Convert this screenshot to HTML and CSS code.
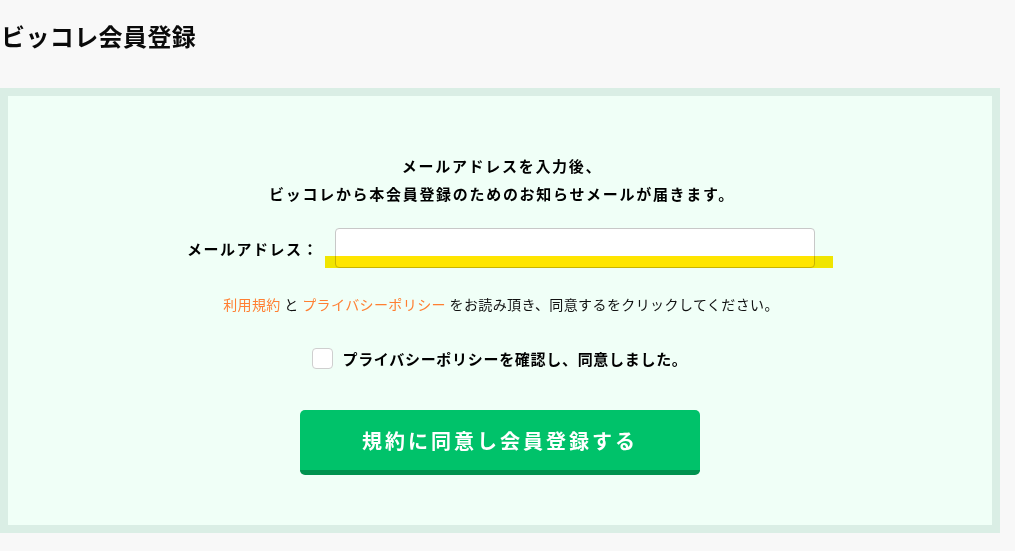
FILE: index.html
```html
<!DOCTYPE html>
<html lang="ja">
<head>
  <meta charset="UTF-8">
  <title>ビッコレ会員登録</title>
  <link rel="stylesheet" href="styles.css">
</head>
<body>

  <h1 class="page-title">ビッコレ会員登録</h1>

  <div class="register-box">
    <form id="registerForm">
      <p class="lead">
        メールアドレスを入力後、<br>
        ビッコレから本会員登録のためのお知らせメールが届きます。
      </p>

      <div class="email-row">
        <label for="email" class="email-label">メールアドレス：</label>
        <div class="email-field">
          <input type="email" id="email" class="email-input" />
          <span class="marker"></span>
        </div>
      </div>

      <p class="terms">
        <a href="#">利用規約</a> と <a href="#">プライバシーポリシー</a> をお読み頂き、同意するをクリックしてください。
      </p>

      <label class="agree">
        <input type="checkbox" id="agree" />
        <span class="agree-box"></span>
        <span class="agree-text">プライバシーポリシーを確認し、同意しました。</span>
      </label>

      <button type="submit" class="submit-btn">規約に同意し会員登録する</button>
    </form>
  </div>

</body>
</html>
```

FILE: styles.css
```css
* {
  box-sizing: border-box;
}
html, body {
  margin: 0;
  padding: 0;
  background-color: #f8f8f8;
  font-family: "Noto Sans CJK JP", "Noto Sans", sans-serif;
  color: #111;
}
.page-title {
  margin: 0;
  height: 88px;
  padding: 20px 0 0 1px;
  font-size: 24px;
  font-weight: 700;
  line-height: 32px;
  letter-spacing: 0.4px;
  color: #0a0a0a;
}
.register-box {
  width: 1000px;
  height: 445px;
  border: 8px solid #daeee5;
  background-color: #f0fff7;
}
form {
  display: flex;
  flex-direction: column;
  align-items: center;
  padding-top: 56px;
}
.lead {
  margin: 0;
  font-size: 15px;
  font-weight: 700;
  line-height: 28px;
  letter-spacing: 1.7px;
  text-align: center;
  padding-left: 4px;
  color: #000;
}
.email-row {
  display: flex;
  align-items: center;
  gap: 16px;
  margin-top: 20px;
  padding-left: 2px;
}
.email-label {
  font-size: 15px;
  font-weight: 700;
  letter-spacing: 1.5px;
  color: #000;
}
.email-field {
  position: relative;
}
.email-input {
  display: block;
  width: 480px;
  height: 40px;
  border: 1px solid #c8c8c8;
  border-radius: 4px;
  background: #fff;
  font-size: 15px;
  padding: 0 10px;
}
.marker {
  position: absolute;
  left: -10px;
  top: 28px;
  width: 508px;
  height: 12px;
  background-color: #ffe500;
  mix-blend-mode: multiply;
  pointer-events: none;
}
.terms {
  margin: 26px 0 0;
  font-size: 14px;
  line-height: 20px;
  letter-spacing: 0.4px;
  padding-left: 2px;
}
.terms a {
  color: #ff7f32;
  text-decoration: none;
}
.agree {
  display: flex;
  align-items: center;
  gap: 9px;
  margin-top: 34px;
  cursor: pointer;
}
.agree input {
  display: none;
}
.agree-box {
  width: 21px;
  height: 21px;
  border: 1px solid #cfcfcf;
  border-radius: 4px;
  background: #fff;
}
.agree-text {
  font-size: 15px;
  font-weight: 700;
  letter-spacing: 0.7px;
  color: #000;
}
.submit-btn {
  margin-top: 41px;
  width: 400px;
  height: 65px;
  border: none;
  border-bottom: 5px solid #00924f;
  border-radius: 5px;
  background-color: #00c26a;
  color: #fff;
  font-family: inherit;
  font-size: 20px;
  font-weight: 700;
  letter-spacing: 3px;
  padding: 0 0 0 0;
  cursor: pointer;
}
```
